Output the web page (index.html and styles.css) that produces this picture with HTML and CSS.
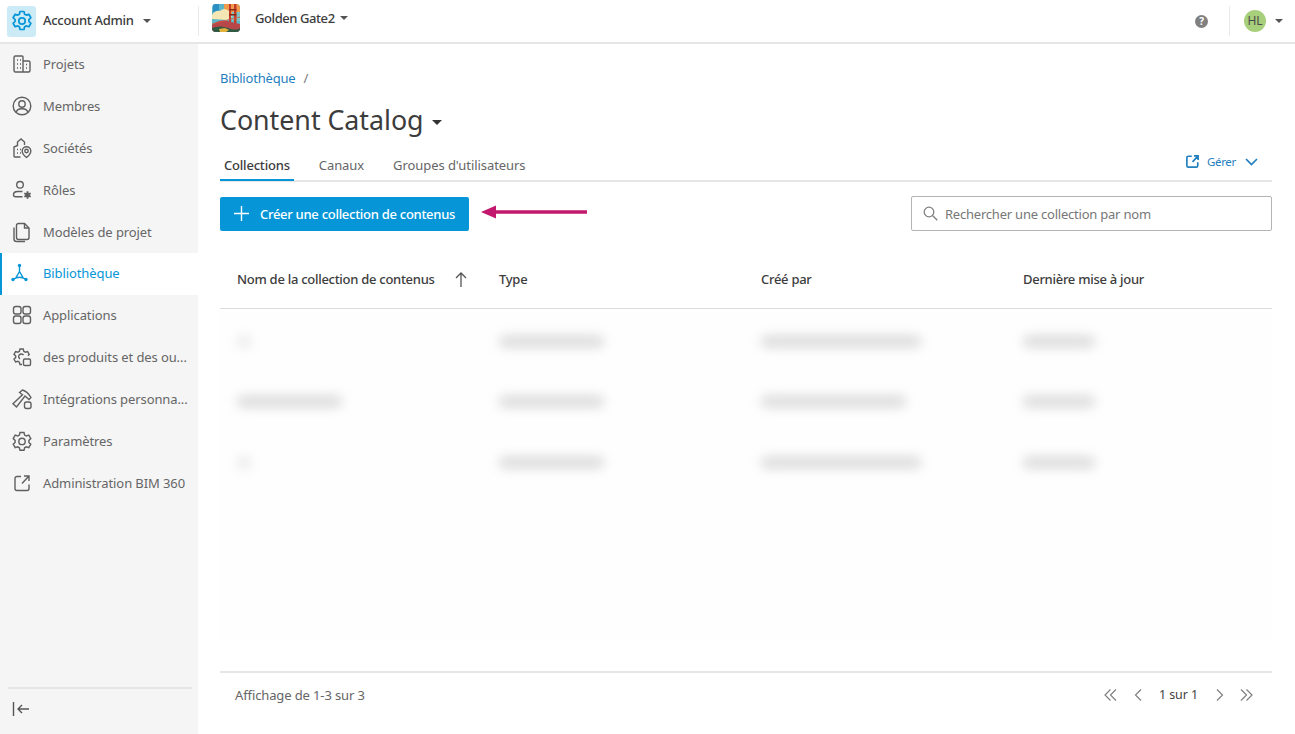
FILE: index.html
```html
<!DOCTYPE html>
<html lang="fr">
  <head>
    <meta charset="UTF-8" />
    <meta name="viewport" content="width=device-width, initial-scale=1.0" />
    <title>Content Catalog</title>
    <link rel="stylesheet" href="styles.css">
  </head>

  <body>
    <header class="topbar">
      <div class="account">
        <span class="account-icon">
          <svg width="20" height="22" viewBox="0 0 20 22" fill="none" stroke="#0696d7" stroke-width="1.7" stroke-linejoin="round"><path d="M8 1.500h4l.6 2.700 1.600.9 2.700-.8 2 3.400-2 1.900v1.800l2 1.900-2 3.400-2.700-.8-1.600.9-.6 2.700H8l-.6-2.700-1.600-.9-2.700.8-2-3.400 2-1.900V9.600l-2-1.900 2-3.400 2.700.8 1.600-.9z"/><circle cx="10" cy="11" r="3.200"/></svg>
        </span>
        <span class="account-name">Account Admin</span>
        <span class="caret"></span>
      </div>
      <div class="project">
        <svg class="project-thumb" width="28" height="28" viewBox="0 0 28 28">
          <defs><clipPath id="thumb"><rect width="28" height="28" rx="4"/></clipPath></defs>
          <g clip-path="url(#thumb)">
            <rect width="28" height="28" fill="#5cb6c9"/>
            <rect x="12" width="16" height="11" fill="#ef9a4c"/>
            <path d="M1 0h6v8H1z" fill="#2b8fc4"/>
            <path d="M0 11q3-5 8-4 4-4 9 0l3 6-5 3-15-1z" fill="#f4e7b4"/>
            <path d="M20 8h8v9h-8z" fill="#7cc4c4"/>
            <path d="M17 0h2v22h-2zM22 0h2.500v22H22z" fill="#c63c28"/>
            <path d="M17 5h7.500v1.500H17zM17 10h7.500v1.500H17z" fill="#8c2a1e"/>
            <path d="M0 21q7-6 15-4t13 3v8H0z" fill="#b8474a"/>
            <path d="M0 20q12-3 28-7" fill="none" stroke="#d7553a" stroke-width=".8"/>
            <path d="M0 24q8-3 16 0t12 0v4H0z" fill="#2f5a44"/>
            <path d="M7 25l6-1 4 2-3 2H8z" fill="#e3b23c"/>
          </g>
        </svg>
        <span class="project-name">Golden Gate2</span>
        <span class="caret"></span>
      </div>
      <div class="topbar-right">
        <span class="help">?</span>
        <div class="user">
          <span class="avatar">HL</span>
          <span class="caret"></span>
        </div>
      </div>
    </header>

    <div class="layout">
      <nav class="sidebar">
        <ul class="menu">
          <li>
            <svg viewBox="0 0 20 20"><path d="M3.500 2h6.500a1 1 0 0 1 1 1v15H3.500a1.500 1.500 0 0 1-1.500-1.500v-13A1.500 1.500 0 0 1 3.500 2zM11 7h5.500A1.500 1.500 0 0 1 18 8.500v8a1.500 1.500 0 0 1-1.500 1.500H11"/><path class="dots" d="M5 6h1M8 6h1M5 10h1M8 10h1M5 14h1M8 14h1M14 10.500h1M14 14h1"/></svg>
            Projets
          </li>
          <li>
            <svg viewBox="0 0 20 20"><circle cx="10" cy="10" r="8.800"/><circle cx="10" cy="8" r="3.200"/><path d="M4.200 16.500c.5-3 3-3.800 5.800-3.800s5.300.8 5.800 3.800"/></svg>
            Membres
          </li>
          <li>
            <svg viewBox="0 0 20 20"><path d="M8.500 19H3a1 1 0 0 1-1-1V9l3.500-1.500V4L9 1l3.500 3v3"/><path class="dots" d="M5 11.500h1M8 11.500h1M5 15h1M8 15h1"/><path d="M14.500 19.500s-4.300-3.200-4.300-6.500a4.300 4.300 0 0 1 8.600 0c0 3.300-4.300 6.500-4.300 6.500z"/><circle cx="14.500" cy="13" r="1.700"/></svg>
            Sociétés
          </li>
          <li>
            <svg viewBox="0 0 20 20"><circle cx="8" cy="4.800" r="3.300"/><path d="M10.500 11.500H5.500c-2.500 0-4 1.500-4 3.300 0 1.300 1 2 2.200 2h6.800"/><circle class="gear" cx="15.500" cy="15" r="2.500"/><path class="gear-teeth" d="M15.500 11.300v1.700M15.500 17v1.700M12.300 13.200l1.500.8M17.200 16l1.500.8M12.300 16.800l1.500-.8M17.200 14l1.500-.8"/></svg>
            Rôles
          </li>
          <li>
            <svg viewBox="0 0 20 20"><path d="M6.500 1.500h6L17 6v9.500a2 2 0 0 1-2 2H6.500a2 2 0 0 1-2-2v-12a2 2 0 0 1 2-2z"/><path d="M12.500 1.500V6H17"/><path d="M2 5.500v11.500a2.500 2.500 0 0 0 2.500 2.500H13"/></svg>
            Modèles de projet
          </li>
          <li class="active">
            <svg viewBox="0 0 20 20"><circle class="node" cx="7.500" cy="2.500" r="1.700"/><circle class="node" cx="1" cy="16.500" r="1.700"/><circle class="node" cx="14" cy="16.500" r="1.700"/><path d="M7.500 3v5.500M7.500 8.500 3.800 14.800M7.500 8.500l3.700 6.300M1.500 16c3.500-2 8.500-2 12 0"/></svg>
            Bibliothèque
          </li>
          <li>
            <svg viewBox="0 0 20 20"><rect x="1.500" y="1.500" width="7.500" height="7.500" rx="2.200"/><rect x="11" y="1.500" width="7.500" height="7.500" rx="2.200"/><rect x="1.500" y="11" width="7.500" height="7.500" rx="2.200"/><rect x="11" y="11" width="7.500" height="7.500" rx="2.200"/></svg>
            Applications
          </li>
          <li>
            <svg viewBox="0 0 20 20"><path d="M10 17.500H8l-.6-2.300-1.500-.9-2.300.7L2 12.200 3.700 10.500V9L2 7.300 3.600 4.500l2.300.7 1.500-.9L8 2h3.200l.6 2.300 1.500.9 2.300-.7 1.600 2.800-1.200 1.400"/><path d="M11.500 8.200A2.600 2.600 0 1 0 8 11.800"/><rect x="11.500" y="12" width="7" height="6.500" rx="1.300"/></svg>
            des produits et des ou...
          </li>
          <li>
            <svg viewBox="0 0 20 20"><path d="M7.500 3.500 10.500 1c3 .8 6 3.500 8.500 7.500l-2 2-4-3.500-8.500 11L1 14.800l9.500-9z"/><rect x="12.500" y="13" width="6.500" height="6.500" rx="2"/></svg>
            Intégrations personna...
          </li>
          <li>
            <svg viewBox="0 0 20 20"><path d="M8 1.500h4l.6 2.500 1.700 1 2.500-.8 2 3.400-1.900 1.800v2l1.900 1.800-2 3.400-2.500-.8-1.700 1-.6 2.500H8l-.6-2.500-1.700-1-2.500.8-2-3.400 1.900-1.800v-2L1.200 7.600l2-3.400 2.500.8 1.700-1z"/><circle cx="10" cy="10.400" r="3.200"/></svg>
            Paramètres
          </li>
          <li>
            <svg viewBox="0 0 20 20"><path d="M9 3.500H5a2 2 0 0 0-2 2v10a2 2 0 0 0 2 2h10a2 2 0 0 0 2-2V11.500M10 10.500l6.500-7M12 3h5v5"/></svg>
            Administration BIM 360
          </li>
        </ul>
        <div class="collapse">
          <svg width="18" height="16" viewBox="0 0 18 16" fill="none" stroke="#555" stroke-width="1.400"><path d="M1.500 1v14M17 8H6M10 4 6 8l4 4"/></svg>
        </div>
      </nav>

      <main class="content">
        <div class="breadcrumb"><a>Bibliothèque</a><span>/</span></div>
        <h1 class="title">Content Catalog<span class="caret caret-dark"></span></h1>

        <div class="tabs">
          <span class="tab active">Collections</span>
          <span class="tab">Canaux</span>
          <span class="tab">Groupes d'utilisateurs</span>
          <span class="manage">
            <svg width="15" height="15" viewBox="0 0 20 20" fill="none" stroke="#1f7fbf" stroke-width="2.200"><path d="M9 3H4.500a2 2 0 0 0-2 2v10.500a2 2 0 0 0 2 2H15a2 2 0 0 0 2-2V11M10 10.500 17.500 2.500M12 2.500h5.500V8"/></svg>
            Gérer
            <svg class="manage-chevron" width="13" height="8" viewBox="0 0 13 8" fill="none" stroke="#1f7fbf" stroke-width="1.700"><path d="m1 1 5.500 5.500L12 1"/></svg>
          </span>
        </div>

        <div class="toolbar">
          <button class="create">
            <svg width="15" height="15" viewBox="0 0 15 15" stroke="#fff" stroke-width="1.400"><path d="M7.500 0v15M0 7.500h15"/></svg>
            Créer une collection de contenus
          </button>
          <svg class="pointer" width="106" height="16" viewBox="0 0 106 16"><path d="M0 8 15 1.500v4.700h91v3.600H15v4.700z" fill="#c2196f"/></svg>
          <div class="search">
            <svg width="15" height="15" viewBox="0 0 15 15" fill="none" stroke="#808080" stroke-width="1.300"><circle cx="6" cy="6" r="4.800"/><path d="m9.500 9.500 4.800 4.800"/></svg>
            Rechercher une collection par nom
          </div>
        </div>

        <div class="table-head">
          <div class="th th-sort">Nom de la collection de contenus
            <svg width="12" height="15" viewBox="0 0 12 15" fill="none" stroke="#555" stroke-width="1.300"><path d="M6 15V1M1 6l5-5 5 5"/></svg>
          </div>
          <div class="th">Type</div>
          <div class="th">Créé par</div>
          <div class="th">Dernière mise à jour</div>
        </div>

        <div class="table-body">
          <div class="row">
            <div><span class="smudge smudge-dot"></span></div>
            <div><span class="smudge smudge-type"></span></div>
            <div><span class="smudge smudge-mail"></span></div>
            <div><span class="smudge smudge-date"></span></div>
          </div>
          <div class="row">
            <div><span class="smudge smudge-name"></span></div>
            <div><span class="smudge smudge-type"></span></div>
            <div><span class="smudge smudge-mail-short"></span></div>
            <div><span class="smudge smudge-date"></span></div>
          </div>
          <div class="row">
            <div><span class="smudge smudge-dot"></span></div>
            <div><span class="smudge smudge-type"></span></div>
            <div><span class="smudge smudge-mail"></span></div>
            <div><span class="smudge smudge-date"></span></div>
          </div>
        </div>

        <footer class="table-foot">
          <span>Affichage de 1-3 sur 3</span>
          <div class="pager">
            <svg width="13" height="12" viewBox="0 0 13 12" fill="none" stroke="#808080" stroke-width="1.200"><path d="M6.500.5 1 6l5.500 5.500M12 .5 6.500 6l5.500 5.500"/></svg>
            <svg class="pager-prev" width="8" height="12" viewBox="0 0 8 12" fill="none" stroke="#808080" stroke-width="1.200"><path d="M7 .5 1.500 6 7 11.500"/></svg>
            <span class="pager-count">1 sur 1</span>
            <svg class="pager-next" width="8" height="12" viewBox="0 0 8 12" fill="none" stroke="#808080" stroke-width="1.200"><path d="M1 .5 6.500 6 1 11.500"/></svg>
            <svg width="13" height="12" viewBox="0 0 13 12" fill="none" stroke="#808080" stroke-width="1.200"><path d="M1 .5 6.500 6 1 11.500M6.500.5 12 6l-5.500 5.500"/></svg>
          </div>
        </footer>
      </main>
    </div>
  </body>
</html>
```

FILE: styles.css
```css
* {
  box-sizing: border-box;
}

html,
body {
  height: 100%;
}

body {
  display: flex;
  flex-direction: column;
  margin: 0;
  overflow: hidden;
  background-color: #fff;
  color: #3c3c3c;
  font-family: "Noto Sans", "Liberation Sans", sans-serif;
  font-size: 13px;
  letter-spacing: -0.03px;
}

ul {
  margin: 0;
  padding-left: 0;
  list-style: none;
}

.caret {
  display: inline-block;
  flex: none;
  width: 0;
  height: 0;
  border-left: 4px solid transparent;
  border-right: 4px solid transparent;
  border-top: 4px solid #555;
}

/* top bar */
.topbar {
  display: flex;
  align-items: center;
  flex: none;
  height: 44px;
  border-bottom: 2px solid #e6e6e6;
}

.account {
  display: flex;
  align-items: center;
  width: 199px;
  height: 30px;
  padding-left: 7px;
  border-right: 1px solid #ebebeb;
}

.account-icon {
  display: flex;
  align-items: center;
  justify-content: center;
  width: 29px;
  height: 31px;
  border-radius: 3px;
  background-color: #cdeaf7;
}

.account-name {
  margin: -2px 9px 0 7px;
  font-weight: 500;
  letter-spacing: -0.3px;
}

.project {
  display: flex;
  align-items: center;
  margin-left: 13px;
  padding-bottom: 6px;
}

.project-name {
  margin: 0 5px 0 15px;
  font-weight: 500;
  letter-spacing: -0.42px;
}

.topbar-right {
  display: flex;
  align-items: center;
  margin-left: auto;
}

.help {
  width: 13px;
  height: 13px;
  border-radius: 50%;
  background-color: #808080;
  color: #fff;
  text-align: center;
  font-size: 10px;
  font-weight: 700;
  line-height: 13px;
}

.user {
  display: flex;
  align-items: center;
  height: 30px;
  margin-left: 21px;
  padding: 0 12px 0 14px;
  border-left: 1px solid #ebebeb;
}

.avatar {
  width: 22px;
  height: 22px;
  margin-right: 9px;
  border-radius: 50%;
  background-color: #a8cf7c;
  color: #4a4a4a;
  text-align: center;
  font-size: 12px;
  line-height: 22px;
}

/* sidebar */
.layout {
  display: flex;
  flex: 1;
  min-height: 0;
}

.sidebar {
  display: flex;
  flex-direction: column;
  flex: none;
  width: 198px;
  background-color: #f5f5f5;
}

.menu {
  flex: 1;
}

.menu li {
  display: flex;
  align-items: center;
  height: 41.900px;
  padding: 0 0 2px 12px;
  color: #666;
  letter-spacing: -0.1px;
  white-space: nowrap;
}

.menu li svg {
  flex: none;
  width: 20px;
  height: 20px;
  margin-right: 11px;
  overflow: visible;
  fill: none;
  stroke: #5f5f5f;
  stroke-width: 1.400;
}

.menu li svg .dots {
  stroke-width: 1.600;
}

.menu li svg .gear {
  fill: #5f5f5f;
  stroke: none;
}

.menu li svg .gear-teeth {
  stroke-width: 1.800;
}

.menu li svg .node {
  fill: #0696d7;
  stroke: none;
}

.menu li.active {
  border-left: 2px solid #0696d7;
  padding-left: 10px;
  background-color: #fff;
  color: #0696d7;
}

.menu li.active svg {
  stroke: #0696d7;
}

.collapse {
  height: 47px;
  margin: 0 6px 0 8px;
  padding: 12px 0 0 4px;
  border-top: 2px solid #e6e6e6;
}

/* main area */
.content {
  display: flex;
  flex-direction: column;
  flex: 1;
  min-width: 0;
  padding: 25px 23px 0 22px;
}

.breadcrumb {
  height: 18px;
  line-height: 18px;
  letter-spacing: -0.2px;
}

.breadcrumb a {
  color: #1f7fbf;
}

.breadcrumb span {
  margin-left: 8px;
  color: #777;
}

.title {
  margin: 13px 0 0;
  color: #3c3c3c;
  font-size: 26.800px;
  font-weight: 400;
  line-height: 40px;
}

.title .caret-dark {
  margin-left: 8px;
  vertical-align: middle;
  border-left-width: 5px;
  border-right-width: 5px;
  border-top: 5px solid #333;
}

.tabs {
  display: flex;
  align-items: center;
  height: 34px;
  margin-top: 8px;
  border-bottom: 2px solid #e6e6e6;
}

.tab {
  height: 34px;
  margin-right: 21px;
  padding: 8px 4px 0;
  color: #666;
  line-height: 20px;
  letter-spacing: -0.07px;
}

.tab.active {
  border-bottom: 2px solid #0696d7;
  color: #3c3c3c;
  font-weight: 500;
  letter-spacing: -0.2px;
}

.manage {
  display: flex;
  align-items: center;
  margin-left: auto;
  padding: 0 14px 5px 0;
  color: #1f7fbf;
  font-size: 11.500px;
  letter-spacing: -0.3px;
}

.manage svg {
  margin-right: 7px;
}

.manage .manage-chevron {
  margin: 0 0 0 9px;
}

.toolbar {
  display: flex;
  align-items: center;
  margin-top: 14px;
}

.create {
  display: flex;
  align-items: center;
  width: 249px;
  height: 34px;
  padding: 0 0 0 14px;
  border: none;
  border-radius: 2px;
  background-color: #0696d7;
  color: #fff;
  font-family: inherit;
  font-size: 13px;
  font-weight: 500;
  letter-spacing: -0.28px;
  white-space: nowrap;
}

.create svg {
  margin-right: 11px;
}

.pointer {
  margin: 0 0 4px 12px;
}

.search {
  display: flex;
  align-items: center;
  width: 361px;
  height: 35px;
  margin-left: auto;
  padding-left: 11px;
  border: 1px solid #b4b4b4;
  border-radius: 2px;
  color: #777;
  letter-spacing: -0.22px;
}

.search svg {
  margin-right: 7px;
}

.table-head {
  display: grid;
  grid-template-columns: 262px 262px 262px 1fr;
  align-items: center;
  height: 78px;
  padding: 19px 0 0 17px;
  border-bottom: 1px solid #dcdcdc;
}

.th {
  color: #3c3c3c;
  font-weight: 500;
  letter-spacing: -0.28px;
}

.th-sort {
  display: flex;
  align-items: center;
  white-space: nowrap;
}

.th-sort svg {
  margin-left: 20px;
}

.table-body {
  flex: 1;
  margin-bottom: 30px;
  padding-top: 2px;
  background-color: #fefefe;
}

.row {
  display: grid;
  grid-template-columns: 262px 262px 262px 1fr;
  align-items: center;
  height: 60.500px;
  padding-left: 17px;
}

.smudge {
  display: block;
  height: 11px;
  border-radius: 6px;
  background-color: #d8d8d8;
  filter: blur(6px);
}

.smudge-dot {
  width: 14px;
  background-color: #e8e8e8;
}

.smudge-type {
  width: 105px;
}

.smudge-mail {
  width: 160px;
}

.smudge-mail-short {
  width: 145px;
}

.smudge-date {
  width: 72px;
}

.smudge-name {
  width: 105px;
}

.table-foot {
  display: flex;
  align-items: center;
  justify-content: space-between;
  flex: none;
  height: 63px;
  padding: 0 19px 18px 15px;
  border-top: 2px solid #e6e6e6;
  color: #666;
  letter-spacing: -0.12px;
}

.pager {
  display: flex;
  align-items: center;
}

.pager-prev {
  margin-left: 17px;
}

.pager-next {
  margin-right: 16px;
}

.pager-count {
  margin: 0 18px 0 17px;
  color: #444;
  font-size: 12.500px;
  letter-spacing: -0.1px;
}
```
